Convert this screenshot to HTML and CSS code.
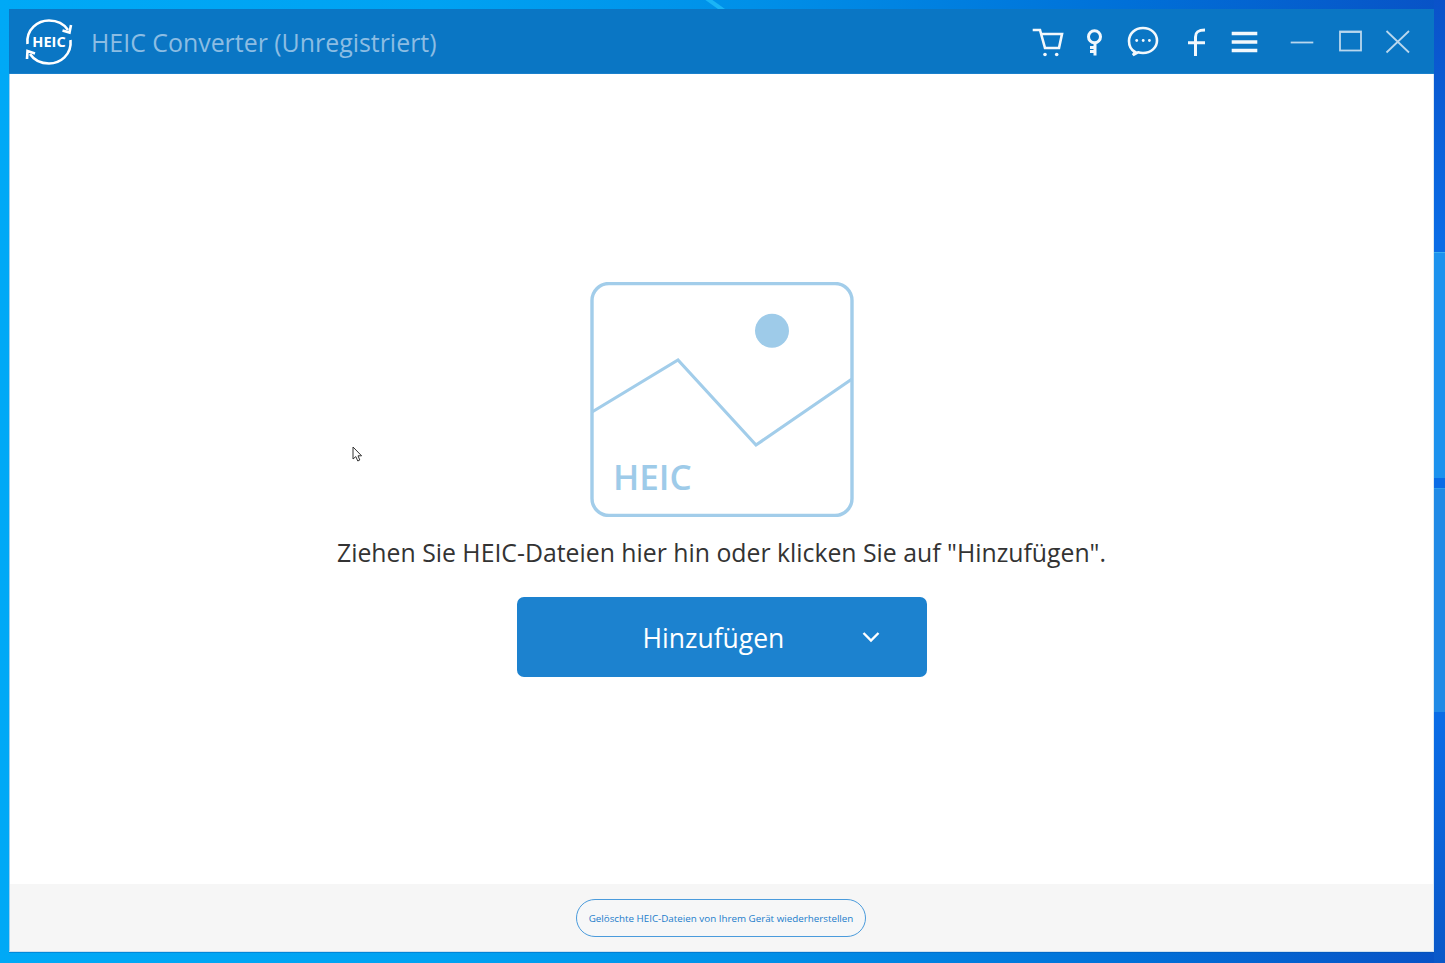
FILE: index.html
```html
<!DOCTYPE html>
<html lang="de">
<head>
<meta charset="utf-8">
<title>HEIC Converter</title>
<link rel="stylesheet" href="styles.css">
</head>
<body>
<div class="pane pane-strip"></div>
<div class="pane pane-a"></div>
<div class="pane pane-b"></div>
<div class="streak"></div>
<div class="window">
  <header class="titlebar">
    <svg class="logo" viewBox="0 0 50 50" width="50" height="50" aria-hidden="true">
      <path class="logo-arc" d="M3.5 27 C2 12 14 3.5 25 3.5 C33 3.5 40 7 44 13"/>
      <path class="logo-arc" d="M46.5 23 C48 38 36 46.5 25 46.5 C17 46.5 10 43 6 37"/>
      <path class="logo-head" d="M47 8 L45.5 15.5 L38.5 13.5"/>
      <path class="logo-head" d="M3 42 L3.5 34 L11 36.5"/>
      <text class="logo-text" x="25" y="30" text-anchor="middle">HEIC</text>
    </svg>
    <h1 class="title">HEIC Converter (Unregistriert)</h1>
    <div class="tools">
      <div class="group">
        <svg class="tool" viewBox="0 0 48 64" aria-hidden="true"><path class="ln" d="M9.7 21 H17 L22 39 H36 L39 25 H19"/><circle class="dot" cx="22" cy="45.5" r="1.8"/><circle class="dot" cx="33.7" cy="45.5" r="1.8"/></svg>
        <svg class="tool" viewBox="0 0 48 64" aria-hidden="true"><circle class="ln heavy" cx="23.5" cy="27.7" r="6"/><path class="ln heavy" d="M24 34 V46.5 M24 38.5 H19 M24 42.5 H19"/></svg>
        <svg class="tool" viewBox="0 0 48 64" aria-hidden="true"><path class="ln" d="M16 43 C11.5 40.5 10 36 10 32 C10 24.5 16 19 24 19 C32 19 38 24.5 38 31.5 C38 38.5 32 44 24 44 C22 44 20.5 43.8 19 43.3 L14 46 Z"/><circle class="dot" cx="17.7" cy="31.5" r="1.4"/><circle class="dot" cx="24.2" cy="31.5" r="1.4"/><circle class="dot" cx="30.4" cy="31.5" r="1.4"/></svg>
      </div>
      <div class="group group-mid">
        <svg class="tool" viewBox="0 0 48 64" aria-hidden="true"><path class="ln heavy" d="M23.5 47 V28 C23.5 23 26 21 33 21 M16 33.7 H33"/></svg>
        <svg class="tool" viewBox="0 0 48 64" aria-hidden="true"><path class="ln thick" d="M11.7 24.5 H37.3 M11.7 33 H37.3 M11.7 41.5 H37.3"/></svg>
      </div>
      <div class="group group-win">
        <svg class="tool" viewBox="0 0 48 64" aria-hidden="true"><path class="win" d="M12.7 33.5 H35.3"/></svg>
        <svg class="tool" viewBox="0 0 48 64" aria-hidden="true"><rect class="win" x="14" y="22.5" width="21" height="19"/><path class="win" d="M14 23 H35"/></svg>
        <svg class="tool" viewBox="0 0 48 64" aria-hidden="true"><path class="win" d="M12.5 22 L35 43.5 M35 22 L12.5 43.5"/></svg>
      </div>
    </div>
  </header>
  <main class="stage">
    <svg class="placeholder" viewBox="0 0 264 235" width="264" height="235" aria-hidden="true">
      <rect class="ph-frame" x="2" y="1.5" width="260" height="232" rx="17"/>
      <polyline class="ph-line" points="2,130 88,78 166,163 262,97"/>
      <circle class="ph-sun" cx="182" cy="48.7" r="17"/>
      <text class="ph-text" x="23" y="208">HEIC</text>
    </svg>
    <p class="hint">Ziehen Sie HEIC-Dateien hier hin oder klicken Sie auf "Hinzufügen".</p>
    <button class="add" type="button">
      <span class="add-label">Hinzufügen</span>
      <svg class="add-chevron" viewBox="0 0 18 12" width="18" height="12" aria-hidden="true"><path d="M1.5 2 L9 9.5 L16.5 2"/></svg>
    </button>
    <svg class="cursor" viewBox="0 0 12 17" width="12" height="17" aria-hidden="true"><path d="M1 1 V13 L3.8 10.6 L5.8 15 L7.8 14 L6 9.8 H9.6 Z"/></svg>
  </main>
  <footer class="footer">
    <button class="restore" type="button">Gelöschte HEIC-Dateien von Ihrem Gerät wiederherstellen</button>
  </footer>
</div>
</body>
</html>
```

FILE: styles.css
```css
* { box-sizing: border-box; }

html, body { height: 100%; }

body {
  margin: 0;
  width: 1445px;
  height: 963px;
  overflow: hidden;
  position: relative;
  font-family: "Open Sans", "Noto Sans", sans-serif;
  background: linear-gradient(90deg, #00a9f6 0%, #00a2f2 30%, #0090e8 52%, #0070d8 78%, #0852c6 100%);
}

.pane { position: absolute; left: 1434px; width: 11px; }
.pane-strip { top: 0; height: 963px; background: linear-gradient(180deg, #0a52c9 0%, #0a6ce6 25%, #0a6ce6 75%, #0a58c8 100%); }
.pane-a { top: 252px; height: 226px; background: #1c92ee; border-top: 1px solid #3aaef0; }
.pane-b { top: 488px; height: 224px; background: #208ae6; border-top: 1px solid #2f9dea; }

.streak {
  position: absolute;
  left: 655px;
  top: 0;
  width: 70px;
  height: 9px;
  background: #1ab4f6;
  clip-path: polygon(72% 0, 82% 0, 100% 100%, 90% 100%);
}

.window {
  position: relative;
  margin: 9px 0 0 9px;
  width: 1425px;
  height: 943px;
  display: flex;
  flex-direction: column;
  background: #fff;
  border-bottom: 1px solid #cfe0ee;
  box-shadow: 0 1px 0 rgba(0, 80, 170, 0.35);
}

.titlebar {
  flex: none;
  height: 65px;
  display: flex;
  align-items: center;
  padding: 0 12px 0 15px;
  background: #0a76c4;
  border-bottom: 1px solid #1a80cc;
}

.logo { flex: none; margin-top: 1px; }
.logo-arc { fill: none; stroke: #fff; stroke-width: 2.6; }
.logo-head { fill: none; stroke: #fff; stroke-width: 2.6; }
.logo-text { fill: #fff; font-size: 14.5px; font-weight: 700; font-family: "Open Sans", sans-serif; }

.title {
  margin: 2px 0 0 17px;
  font-size: 24.9px;
  font-weight: 400;
  color: #8cbde3;
  white-space: nowrap;
}

.tools { margin-left: auto; display: flex; }
.group { display: flex; }
.group-mid { margin-left: 5px; }
.group-win { margin-left: 10px; }

.tool { display: block; width: 48px; height: 64px; }
.ln { fill: none; stroke: #f2f8fc; stroke-width: 2.6; }
.ln.heavy { stroke-width: 3; }
.ln.thick { stroke-width: 3.4; }
.dot { fill: #f2f8fc; }
.win { fill: none; stroke: #b9d7ee; stroke-width: 1.8; }

.stage {
  flex: 1;
  min-height: 0;
  position: relative;
  display: flex;
  flex-direction: column;
  align-items: center;
  justify-content: center;
  border-left: 1px solid #9fd0f0;
  border-right: 1px solid #dbe9f3;
}

.placeholder { display: block; flex: none; }
.ph-frame { fill: none; stroke: #a2cdea; stroke-width: 3.4; }
.ph-line { fill: none; stroke: #a2cdea; stroke-width: 3.2; }
.ph-sun { fill: #9ecbe9; }
.ph-text { fill: #9ecbe9; font-size: 35px; font-weight: 600; font-family: "Open Sans", sans-serif; }

.hint {
  margin: 17px 0 26px;
  font-size: 24.8px;
  line-height: 37px;
  color: #333;
  white-space: nowrap;
}

.add {
  flex: none;
  width: 410px;
  height: 80px;
  padding: 0 0 0 126px;
  display: flex;
  align-items: center;
  border: 0;
  border-radius: 7px;
  background: #1c82cf;
  color: #fff;
  font-family: inherit;
}

.add-label { padding-top: 3px; font-size: 26.5px; line-height: 1; width: 141px; white-space: nowrap; }
.add-chevron { margin-left: 78px; }
.add-chevron path { fill: none; stroke: #fff; stroke-width: 2.4; }

.cursor { position: absolute; left: 342px; top: 372px; }
.cursor path { fill: #fff; stroke: #333; stroke-width: 1; }

.footer {
  flex: none;
  height: 67px;
  display: flex;
  justify-content: center;
  align-items: center;
  background: #f6f6f6;
  border-left: 1px solid #9fd0f0;
  border-right: 1px solid #dbe9f3;
}

.restore {
  width: 290px;
  height: 38px;
  margin-right: 1px;
  padding: 1px 0 0;
  border: 1.5px solid #4a9bdc;
  border-radius: 19px;
  background: #f6f7f8;
  color: #1b7ccb;
  font-family: inherit;
  font-size: 9.8px;
  white-space: nowrap;
}
```
